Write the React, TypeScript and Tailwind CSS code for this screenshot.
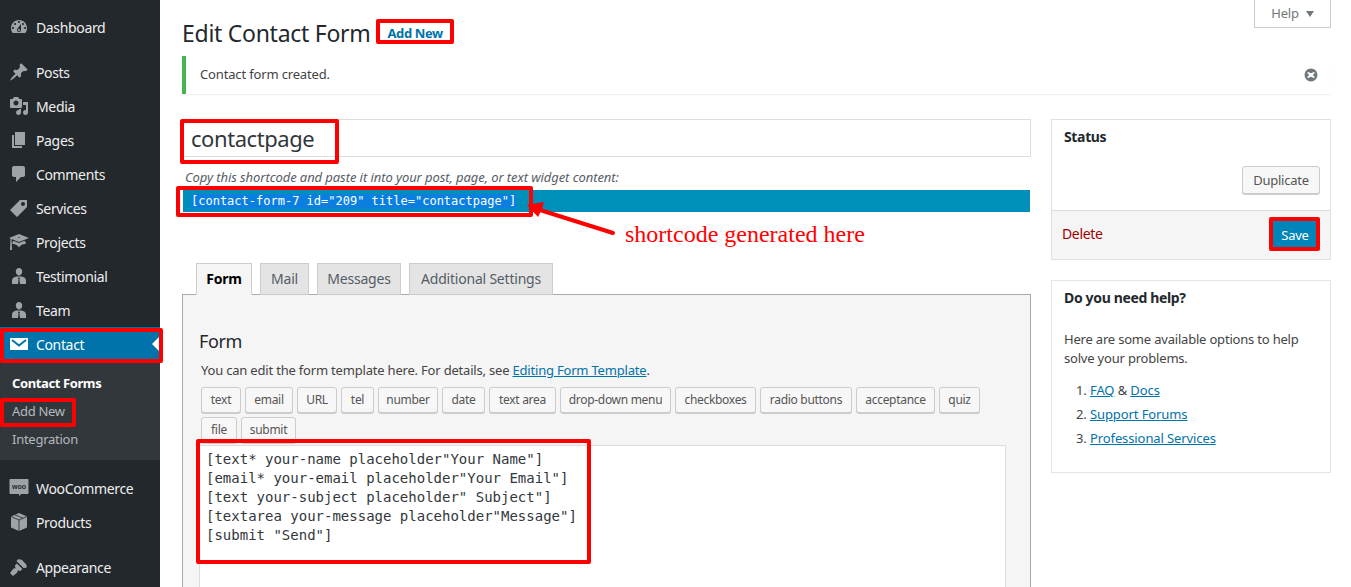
import React from "react";

const sans = "font-['Noto_Sans',sans-serif]";
const mono = "font-['DejaVu_Sans_Mono',monospace]";

// dashicon style glyphs, 20x20 box
const Glyph = ({ d, className = "" }: { d: string; className?: string }) => (
  <svg viewBox="0 0 20 20" className={`h-5 w-5 fill-current ${className}`}>
    <path d={d} fillRule="evenodd" />
  </svg>
);

const icons = {
  dashboard:
    "M3.76 16h12.48c1.1-1.37 1.76-3.11 1.76-5 0-4.42-3.58-8-8-8s-8 3.58-8 8c0 1.89.66 3.63 1.76 5zM10 4c.55 0 1 .45 1 1s-.45 1-1 1-1-.45-1-1 .45-1 1-1zM6 6c.55 0 1 .45 1 1s-.45 1-1 1-1-.45-1-1 .45-1 1-1zm8 0c.55 0 1 .45 1 1s-.45 1-1 1-1-.45-1-1 .45-1 1-1zm-5.37 5.55L12 7v6c0 1.1-.9 2-2 2s-2-.9-2-2c0-.57.24-1.08.63-1.45zM4 10c.55 0 1 .45 1 1s-.45 1-1 1-1-.45-1-1 .45-1 1-1zm12 0c.55 0 1 .45 1 1s-.45 1-1 1-1-.45-1-1 .45-1 1-1zm-5 3c0-.55-.45-1-1-1s-1 .45-1 1 .45 1 1 1 1-.45 1-1z",
  post: "M10.44 3.02l1.82-1.82 6.36 6.35-1.83 1.82c-1.05-.68-2.48-.57-3.41.36l-.75.75c-.92.93-1.04 2.35-.35 3.41l-1.83 1.82-2.41-2.41-2.8 2.79c-.42.42-3.38 2.71-3.8 2.29s1.86-3.39 2.28-3.81l2.79-2.79L4.1 9.36l1.83-1.82c1.05.69 2.48.57 3.4-.36l.75-.75c.93-.92 1.05-2.35.36-3.41z",
  media:
    "M13 11V4c0-.55-.45-1-1-1h-1.67L9 1H5L3.67 3H2c-.55 0-1 .45-1 1v7c0 .55.45 1 1 1h10c.55 0 1-.45 1-1zM7 4.5c1.38 0 2.5 1.12 2.5 2.5S8.38 9.5 7 9.5 4.5 8.38 4.5 7 5.62 4.5 7 4.5zM14 6h5v10.5c0 1.38-1.12 2.5-2.5 2.5S14 17.88 14 16.5s1.12-2.5 2.5-2.5c.17 0 .34.02.5.05V9h-3V6zm-4 8.05V13h2v3.5c0 1.38-1.12 2.5-2.5 2.5S7 17.88 7 16.5 8.12 14 9.5 14c.17 0 .34.02.5.05z",
  page: "M6 15V2h10v13H6zm-1 1h8v2H3V5h2v11z",
  comment:
    "M5 2h9c1.1 0 2 .9 2 2v7c0 1.1-.9 2-2 2h-2l-5 5v-5H5c-1.1 0-2-.9-2-2V4c0-1.1.9-2 2-2z",
  tag: "M11 2h7v7L8 19l-7-7zm3 6c1.1 0 2-.9 2-2s-.9-2-2-2-2 .9-2 2 .9 2 2 2z",
  learn:
    "M10 10L2.54 7.02 3 18H1l.48-11.41L0 6l10-4 10 4zm0-5c-.55 0-1 .22-1 .5s.45.5 1 .5 1-.22 1-.5-.45-.5-1-.5zm0 6l5.57-2.23c.71.94 1.2 2.07 1.36 3.3-.3-.04-.61-.07-.93-.07-2.55 0-4.78 1.37-6 3.41C8.78 13.37 6.55 12 4 12c-.32 0-.63.03-.93.07.16-1.23.65-2.36 1.36-3.3z",
  person:
    "M10 2c1.900 0 3.200 1.500 3.200 3.400S11.800 9.500 10 9.500 6.800 7.300 6.800 5.400 8.100 2 10 2zM3 18v-3.500c0-2.300 2-3.600 4.500-4h5c2.500.4 4.500 1.700 4.500 4V18H3zm7-6.800l-1 1 .6 1L9 18h2l-.6-4.800.6-1-1-1z",
  brush:
    "M14.480 11.060L7.410 3.990l1.500-1.500c.5-.56 2.300-.47 3.590.32 1.280.79 1.460 1.280 2.290 2.090.83.8 1.420 1 2.220 2.290.8 1.280.89 3.090.32 3.590zm-1.060 1.060l-1.500 1.500c-.71.71-2.120.35-2.830-.35l-.71.71c.71.71 0 1.410-.7 2.120L4 19l-3-3 2.880-3.690c.71-.7 1.410-1.410 2.120-.7l.71-.71c-.71-.71-1.060-2.120-.35-2.830l1.500-1.500z",
  dismiss:
    "M10 2c4.420 0 8 3.580 8 8s-3.580 8-8 8-8-3.580-8-8 3.580-8 8-8zm3.500 4.100L10 7.900 6.500 6.100 5.100 7.500 7.900 10l-2.800 2.500 1.400 1.400 3.500-1.800 3.500 1.800 1.400-1.400-2.800-2.500 2.800-2.500z",
};

const MenuRow = ({ icon, label }: { icon: keyof typeof icons; label: string }) => (
  <div className="flex h-[34px] shrink-0 items-center text-[14px] text-[#eeeeee]">
    <span className="flex w-[36px] justify-center pl-[2px] text-[#9ea3a8]">
      <Glyph d={icons[icon]} />
    </span>
    <span className="tracking-[-0.025em]">{label}</span>
  </div>
);

const Sidebar = () => (
  <aside className="flex h-[587px] w-[160px] shrink-0 flex-col overflow-hidden bg-[#23282d] pt-[10px]">
    <MenuRow icon="dashboard" label="Dashboard" />
    <div className="h-[11px] shrink-0" />
    <MenuRow icon="post" label="Posts" />
    <MenuRow icon="media" label="Media" />
    <MenuRow icon="page" label="Pages" />
    <MenuRow icon="comment" label="Comments" />
    <MenuRow icon="tag" label="Services" />
    <MenuRow icon="learn" label="Projects" />
    <MenuRow icon="person" label="Testimonial" />
    <MenuRow icon="person" label="Team" />
    <div className="relative flex h-[34px] shrink-0 items-center bg-[#0073aa] text-[14px] text-white">
      <span className="flex w-[36px] justify-center pl-[2px]">
        <svg viewBox="0 0 20 20" className="h-5 w-5">
          <path d="M2 4h16c.6 0 1 .4 1 1v10c0 .6-.4 1-1 1H2c-.6 0-1-.4-1-1V5c0-.6.4-1 1-1z" fill="#fff" />
          <path d="M3 6l7 5.500L17 6" fill="none" stroke="#0073aa" strokeWidth="2" />
        </svg>
      </span>
      <span className="tracking-[-0.025em]">Contact</span>
      <span className="absolute right-0 top-[9px] h-0 w-0 border-y-[8px] border-r-[8px] border-y-transparent border-r-white" />
    </div>
    <div className="flex h-[99px] shrink-0 flex-col bg-[#32373c] pt-[9px] text-[13px] text-[#b4b9be]">
      <div className="flex h-[28px] items-center pl-[12px] font-bold tracking-[-0.03em] text-white">Contact Forms</div>
      <div className="flex h-[28px] items-center pl-[12px] tracking-[-0.025em]">Add New</div>
      <div className="flex h-[28px] items-center pl-[12px] tracking-[-0.02em]">Integration</div>
    </div>
    <div className="h-[11px] shrink-0" />
    <div className="flex h-[34px] shrink-0 items-center text-[14px] text-[#eeeeee]">
      <span className="flex w-[36px] justify-center pl-[2px]">
        <svg viewBox="0 0 20 20" className="h-5 w-5">
          <path d="M1.500 1h17c.6 0 1 .4 1 1v13c0 .6-.4 1-1 1H12l-1.500 2.500L10 16H1.500c-.6 0-1-.4-1-1V2c0-.6.4-1 1-1z" fill="#9ea3a8" />
          <text x="10" y="11" textAnchor="middle" fontSize="7" fontWeight="700" fill="#23282d" fontFamily="Liberation Sans, sans-serif">
            woo
          </text>
        </svg>
      </span>
      <span className="tracking-[-0.025em]">WooCommerce</span>
    </div>
    <div className="flex h-[34px] shrink-0 items-center text-[14px] text-[#eeeeee]">
      <span className="flex w-[36px] justify-center pl-[2px]">
        <svg viewBox="0 0 20 20" className="h-5 w-5">
          <path d="M10 1l8 3.500v11L10 19l-8-3.500v-11z" fill="#9ea3a8" />
          <path d="M2 4.500L10 8l8-3.500M10 8v11M6 2.800l8 3.500" fill="none" stroke="#23282d" strokeWidth="0.8" />
        </svg>
      </span>
      <span className="tracking-[-0.025em]">Products</span>
    </div>
    <div className="h-[11px] shrink-0" />
    <MenuRow icon="brush" label="Appearance" />
  </aside>
);

const tabs = [
  { label: "Form", w: "w-[56px]", active: true },
  { label: "Mail", w: "w-[49px]" },
  { label: "Messages", w: "w-[84px]" },
  { label: "Additional Settings", w: "w-[144px]" },
];

const tagRows = [
  [
    { label: "text", w: "w-[40px]" },
    { label: "email", w: "w-[48px]" },
    { label: "URL", w: "w-[40px]" },
    { label: "tel", w: "w-[33px]" },
    { label: "number", w: "w-[60px]" },
    { label: "date", w: "w-[43px]" },
    { label: "text area", w: "w-[67px]" },
    { label: "drop-down menu", w: "w-[111px]" },
    { label: "checkboxes", w: "w-[81px]" },
    { label: "radio buttons", w: "w-[92px]" },
    { label: "acceptance", w: "w-[79px]" },
    { label: "quiz", w: "w-[41px]" },
  ],
  [
    { label: "file", w: "w-[36px]" },
    { label: "submit", w: "w-[55px]" },
  ],
];

const template = `[text* your-name placeholder"Your Name"]
[email* your-email placeholder"Your Email"]
[text your-subject placeholder" Subject"]
[textarea your-message placeholder"Message"]
[submit "Send"]`;

const FormEditor = () => (
  <div>
    <div className="mt-[51px] flex gap-2 pl-[14px]">
      {tabs.map((t) => (
        <div
          key={t.label}
          className={`${t.w} -mb-px flex h-[32px] items-center justify-center border border-[#cccccc] pb-[2px] text-[14px] tracking-[-0.015em] ${
            t.active
              ? "z-10 border-[#aaaaaa] border-b-[#f5f5f5] bg-[#f5f5f5] font-bold text-black"
              : "bg-[#e4e4e4] text-[#555d66]"
          }`}
        >
          {t.label}
        </div>
      ))}
    </div>
    <div className="h-[294px] border border-[#aaaaaa] bg-[#f5f5f5] pl-[16px] pr-[24px]">
      <h2 className="mt-[34px] text-[18px] leading-[24px] tracking-[-0.02em] text-[#23282d]">Form</h2>
      <p className="mt-[7px] pl-[2px] text-[13px] leading-[20px] tracking-[-0.015em] text-[#444444]">
        You can edit the form template here. For details, see{" "}
        <a className="text-[#0073aa] underline">Editing Form Template</a>.
      </p>
      <div className="mt-[7px] flex flex-col gap-1 pl-[2px]">
        {tagRows.map((row, i) => (
          <div key={i} className="flex gap-1">
            {row.map((b) => (
              <div
                key={b.label}
                className={`${b.w} flex h-[26px] items-center justify-center whitespace-nowrap rounded-[3px] border border-[#cccccc] bg-[#f7f7f7] text-[12px] tracking-[-0.025em] text-[#555555] shadow-[0_1px_0_#cccccc]`}
              >
                {b.label}
              </div>
            ))}
          </div>
        ))}
      </div>
      <pre
        className={`${mono} mt-[2px] h-[200px] border border-[#dddddd] bg-white pl-[6px] pt-[4px] text-[14px] leading-[19px] text-[#32373c]`}
      >
        {template}
      </pre>
    </div>
  </div>
);

const Annotations = () => (
  <>
    <div className="absolute left-[376px] top-[19px] h-[25px] w-[78px] rounded-[2px] border-[4px] border-[#ff0000]" />
    <div className="absolute left-[180px] top-[119px] h-[45px] w-[159px] rounded-[2px] border-[4px] border-[#ff0000]" />
    <div className="absolute left-[176px] top-[186px] h-[31px] w-[357px] rounded-[2px] border-[4px] border-[#ff0000]" />
    <div className="absolute left-[1269px] top-[217px] h-[34px] w-[51px] rounded-[2px] border-[4px] border-[#ff0000]" />
    <div className="absolute left-0 top-[328px] h-[35px] w-[163px] rounded-[2px] border-[4px] border-[#ff0000]" />
    <div className="absolute left-0 top-[398px] h-[29px] w-[76px] rounded-[2px] border-[4px] border-[#ff0000]" />
    <div className="absolute left-[196px] top-[439px] h-[125px] w-[395px] rounded-[2px] border-[4px] border-[#ff0000]" />
    <svg viewBox="0 0 100 40" className="absolute left-[520px] top-[198px] h-[40px] w-[100px]">
      <path d="M93 35L20 12" stroke="#ff0000" strokeWidth="4" strokeLinecap="round" fill="none" />
      <path d="M7 7L24 4L22 11L18 19z" fill="#ff0000" />
    </svg>
    <div className="absolute left-[625px] top-[220px] whitespace-nowrap font-['Liberation_Serif',serif] text-[24px] leading-[28px] text-[#ff0000]">
      shortcode generated here
    </div>
  </>
);

export default function App() {
  return (
    <div className={`${sans} relative flex h-[587px] w-[1351px] overflow-hidden bg-white`}>
      <Sidebar />
      <main className="flex-1 pl-[22px] pr-[20px]">
        <header className="flex h-[56px] items-start justify-between">
          <div className="flex items-center gap-[17px] pt-[18px]">
            <h1 className="text-[23px] leading-[30px] tracking-[-0.012em] text-[#23282d]">Edit Contact Form</h1>
            <span className="pt-[1px] text-[13px] font-bold tracking-[-0.03em] text-[#0073aa]">Add New</span>
          </div>
          <div className="flex h-[28px] w-[77px] items-center justify-center gap-[7px] border border-t-0 border-[#cccccc] text-[13px] tracking-[-0.02em] text-[#72777c]">
            Help
            <span className="h-0 w-0 border-x-[4px] border-t-[6px] border-x-transparent border-t-[#72777c]" />
          </div>
        </header>

        <div className="flex h-[38px] items-center justify-between border-l-4 border-[#46b450] bg-white pl-[14px] pr-[12px] text-[13px] tracking-[-0.012em] text-[#444444] shadow-[0_1px_1px_rgba(0,0,0,0.06)]">
          <span>Contact form created.</span>
          <Glyph d={icons.dismiss} className="h-[16px] w-[16px] text-[#72777c]" />
        </div>

        <div className="mt-[25px] flex items-start gap-5">
          <div className="w-[849px] shrink-0">
            <div className="flex h-[38px] items-center border border-[#dddddd] bg-white pl-[8px] text-[22px] tracking-[-0.02em] text-[#32373c]">
              contactpage
            </div>
            <p className="mt-[12px] h-[17px] pl-[3px] text-[13px] leading-[17px] italic tracking-[-0.006em] text-[#555d66]">
              Copy this shortcode and paste it into your post, page, or text widget content:
            </p>
            <div className={`${mono} mx-px mt-[4px] flex h-[22px] items-center bg-[#008ebb] pl-[8px] pt-[1px] text-[12px] text-white`}>
              <span className="bg-[#0a7fe0] leading-[15px]">{`[contact-form-7 id="209" title="contactpage"]`}</span>
            </div>
            <FormEditor />
          </div>

          <div className="flex w-[280px] shrink-0 flex-col gap-5">
            <section className="h-[141px] border border-[#e0e0e0] bg-white">
              <h3 className="pl-[12px] pt-[7px] text-[14px] font-bold leading-[20px] tracking-[-0.025em] text-[#23282d]">Status</h3>
              <div className="flex h-[54px] items-start justify-end pr-[10px] pt-[19px]">
                <div className="flex h-[28px] w-[78px] items-center justify-center rounded-[3px] border border-[#cccccc] bg-[#f7f7f7] pt-px text-[13px] tracking-[-0.02em] text-[#555555] shadow-[0_1px_0_#cccccc]">
                  Duplicate
                </div>
              </div>
              <div className="mt-[9px] flex h-[49px] items-center justify-between border-t border-[#dddddd] bg-[#f5f5f5] pl-[10px] pr-[11px]">
                <span className="pb-[4px] text-[14px] tracking-[-0.025em] text-[#a00000]">Delete</span>
                <div className="flex h-[28px] w-[48px] items-center justify-center rounded-[3px] bg-[#0085ba] pt-px text-[13px] tracking-[-0.02em] text-white">
                  Save
                </div>
              </div>
            </section>
            <section className="h-[193px] border border-[#e5e5e5] bg-white pl-[12px] text-[13px] tracking-[-0.015em] text-[#444444]">
              <h3 className="pt-[7px] text-[14px] font-bold leading-[20px] tracking-[-0.025em] text-[#23282d]">Do you need help?</h3>
              <p className="mt-[22px] w-[250px] leading-[19px]">Here are some available options to help solve your problems.</p>
              <ol className="mt-[12px] list-decimal pl-[26px] leading-[20px] tracking-[-0.008em]">
                <li>
                  <a className="text-[#0073aa] underline">FAQ</a> &amp; <a className="text-[#0073aa] underline">Docs</a>
                </li>
                <li className="mt-[4px]">
                  <a className="text-[#0073aa] underline">Support Forums</a>
                </li>
                <li className="mt-[4px]">
                  <a className="text-[#0073aa] underline">Professional Services</a>
                </li>
              </ol>
            </section>
          </div>
        </div>
      </main>
      <Annotations />
    </div>
  );
}
